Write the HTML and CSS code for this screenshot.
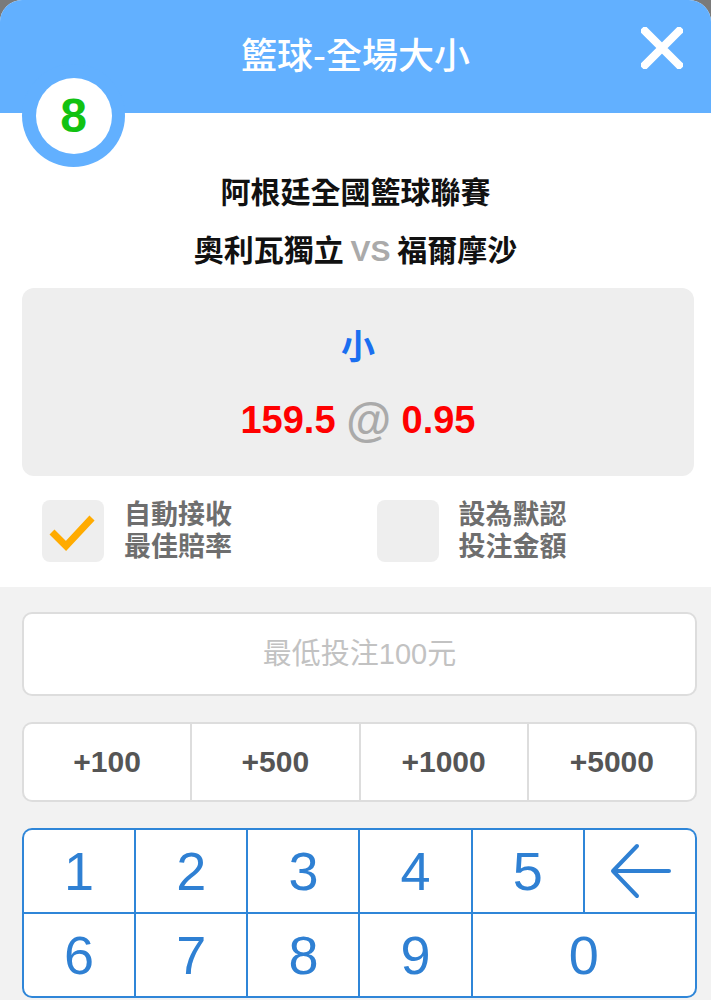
FILE: index.html
```html
<!DOCTYPE html>
<html lang="zh-Hant">
<head>
    <meta charset="UTF-8">
    <meta name="viewport" content="width=device-width, initial-scale=1.0">
    <title>籃球-全場大小</title>
    <link rel="stylesheet" href="styles.css">
</head>
<body>
    <div class="sheet">
        <div class="header">
            <h1 class="title">籃球-全場大小</h1>
            <button class="close" aria-label="關閉">
                <svg width="42" height="42" viewBox="0 0 42 42">
                    <path d="M4 4 L38 38 M38 4 L4 38" stroke="#fff" stroke-width="8" stroke-linecap="square"/>
                </svg>
            </button>
            <div class="badge"><span>8</span></div>
        </div>

        <div class="match">
            <div class="league">阿根廷全國籃球聯賽</div>
            <div class="teams">奧利瓦獨立 <span class="vs">VS</span> 福爾摩沙</div>
        </div>

        <div class="pick">
            <div class="pick-side">小</div>
            <div class="pick-odds">159.5 <span class="at">@</span> 0.95</div>
        </div>

        <div class="options">
            <label class="option">
                <span class="checkbox">
                    <svg width="62" height="62" viewBox="0 0 62 62">
                        <path d="M10 32 L24 46 L50 18" fill="none" stroke="#ffab00" stroke-width="7"/>
                    </svg>
                </span>
                <span class="option-text">自動接收<br>最佳賠率</span>
            </label>
            <label class="option">
                <span class="checkbox"></span>
                <span class="option-text">設為默認<br>投注金額</span>
            </label>
        </div>

        <div class="keys">
            <input class="amount" type="text" placeholder="最低投注100元">

            <div class="quick">
                <button>+100</button>
                <button>+500</button>
                <button>+1000</button>
                <button>+5000</button>
            </div>

            <div class="pad">
                <button>1</button>
                <button>2</button>
                <button>3</button>
                <button>4</button>
                <button>5</button>
                <button class="back" aria-label="刪除">
                    <svg width="62" height="56" viewBox="0 0 62 56">
                        <path d="M28 3 L4 28 L28 53 M4 28 L60 28" fill="none" stroke="#2f80d3" stroke-width="4" stroke-linecap="round" stroke-linejoin="round"/>
                    </svg>
                </button>
                <button>6</button>
                <button>7</button>
                <button>8</button>
                <button>9</button>
                <button class="zero">0</button>
            </div>
        </div>
    </div>
</body>
</html>
```

FILE: styles.css
```css
body {
    margin: 0;
    background: #7a7a7a;
    font-family: "Liberation Sans", "Noto Sans CJK TC", sans-serif;
}
.sheet {
    height: 1000px;
    background: white;
    border-radius: 22px 22px 0 0;
    overflow: hidden;
    display: flex;
    flex-direction: column;
}
.sheet > * {
    flex-shrink: 0;
}
.header {
    position: relative;
    height: 113px;
    background: #62b0ff;
    display: flex;
    align-items: center;
    justify-content: center;
}
.title {
    margin: 0 0 8px;
    color: white;
    font-family: "Noto Sans CJK TC", sans-serif;
    font-size: 36px;
    font-weight: 500;
}
.close {
    position: absolute;
    right: 28px;
    top: 27px;
    padding: 0;
    border: none;
    background: none;
    line-height: 0;
}
.badge {
    position: absolute;
    left: 22px;
    top: 64px;
    width: 103px;
    height: 103px;
    border-radius: 50%;
    background: #62b0ff;
    display: flex;
    align-items: center;
    justify-content: center;
}
.badge span {
    width: 76px;
    height: 76px;
    border-radius: 50%;
    background: white;
    color: #12c212;
    font-size: 48px;
    font-weight: bold;
    display: flex;
    align-items: center;
    justify-content: center;
}
.match {
    padding-top: 57px;
    text-align: center;
    font-family: "Noto Sans CJK TC", sans-serif;
    font-weight: bold;
    font-size: 30px;
    color: #111;
}
.league, .teams {
    height: 40px;
    line-height: 40px;
}
.teams {
    margin-top: 18px;
}
.vs {
    font-family: "Liberation Sans", sans-serif;
    color: #aaa;
}
.pick {
    margin: 20px 17px 0 22px;
    height: 188px;
    box-sizing: border-box;
    padding-top: 35px;
    background: #eee;
    border-radius: 12px;
    text-align: center;
}
.pick-side {
    height: 44px;
    line-height: 44px;
    font-size: 34px;
    font-weight: bold;
    color: #1a6ff0;
    font-family: "Noto Sans CJK TC", sans-serif;
}
.pick-odds {
    margin-top: 31px;
    height: 44px;
    line-height: 44px;
    font-size: 38px;
    font-weight: bold;
    color: #f00;
}
.at {
    color: #aaa;
    font-size: 46px;
    vertical-align: -3px;
}
.options {
    display: flex;
    height: 62px;
    padding: 24px 0 25px 42px;
}
.option {
    width: 337px;
    display: flex;
    align-items: center;
    gap: 20px;
}
.checkbox {
    width: 62px;
    height: 62px;
    border-radius: 8px;
    background: #eee;
    line-height: 0;
}
.option-text {
    font-family: "Liberation Sans", "Noto Sans CJK TC", sans-serif;
    font-size: 27px;
    line-height: 32px;
    font-weight: bold;
    color: #6e6e6e;
}
.keys {
    flex: 1;
    background: #f2f2f2;
    padding: 25px 14px 0 22px;
    display: flex;
    flex-direction: column;
    gap: 26px;
}
.amount {
    flex-shrink: 0;
    height: 84px;
    box-sizing: border-box;
    border: 2px solid #ddd;
    border-radius: 10px;
    background: white;
    text-align: center;
    font-family: "Liberation Sans", "Noto Sans CJK TC", sans-serif;
    font-size: 29px;
    outline: none;
}
.amount::placeholder {
    color: #c2c2c2;
}
.quick {
    flex-shrink: 0;
    height: 80px;
    box-sizing: border-box;
    border: 2px solid #ddd;
    border-radius: 10px;
    background: #ddd;
    overflow: hidden;
    display: grid;
    grid-template-columns: repeat(4, 1fr);
    gap: 2px;
}
.quick button {
    border: none;
    background: white;
    font-family: "Liberation Sans", sans-serif;
    font-size: 30px;
    font-weight: bold;
    color: #555;
}
.pad {
    flex-shrink: 0;
    height: 170px;
    box-sizing: border-box;
    border: 2px solid #2f86d8;
    border-radius: 10px;
    background: #2f86d8;
    overflow: hidden;
    display: grid;
    grid-template-columns: repeat(6, 1fr);
    grid-template-rows: 1fr 1fr;
    gap: 2px;
}
.pad button {
    border: none;
    background: white;
    font-family: "Liberation Sans", sans-serif;
    font-size: 54px;
    color: #2f80d3;
    padding: 0;
}
.pad .back {
    line-height: 0;
}
.pad .zero {
    grid-column: span 2;
}
```
